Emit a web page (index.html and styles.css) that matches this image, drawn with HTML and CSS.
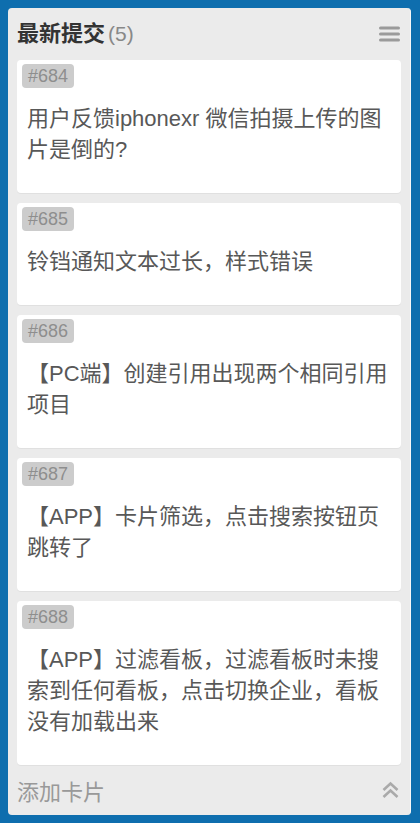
FILE: index.html
```html
<!DOCTYPE html>
<html lang="zh">
<head>
<meta charset="utf-8">
<link rel="stylesheet" href="styles.css">
</head>
<body>
<div class="list">
  <div class="list-header">
    <h2 class="title">最新提交<span class="count">(5)</span></h2>
    <svg class="menu" width="21" height="16" viewBox="0 0 21 16">
      <rect x="0" y="0.5" width="21" height="3" rx="1.5" fill="#9a9a9a"/>
      <rect x="0" y="6.5" width="21" height="3" rx="1.5" fill="#9a9a9a"/>
      <rect x="0" y="12.5" width="21" height="3" rx="1.5" fill="#9a9a9a"/>
    </svg>
  </div>
  <div class="cards">
    <div class="card"><span class="tag">#684</span><p class="text">用户反馈iphonexr 微信拍摄上传的图片是倒的?</p></div>
    <div class="card"><span class="tag">#685</span><p class="text">铃铛通知文本过长，样式错误</p></div>
    <div class="card"><span class="tag">#686</span><p class="text">【PC端】创建引用出现两个相同引用项目</p></div>
    <div class="card"><span class="tag">#687</span><p class="text">【APP】卡片筛选，点击搜索按钮页跳转了</p></div>
    <div class="card"><span class="tag">#688</span><p class="text">【APP】过滤看板，过滤看板时未搜索到任何看板，点击切换企业，看板没有加载出来</p></div>
  </div>
  <div class="list-footer">
    <span class="add">添加卡片</span>
    <svg class="collapse" width="17" height="18" viewBox="0 0 17 18">
      <polyline points="1.5,9 8.5,2.5 15.5,9" fill="none" stroke="#aaaaaa" stroke-width="2.6"/>
      <polyline points="1.5,16 8.5,9.5 15.5,16" fill="none" stroke="#aaaaaa" stroke-width="2.6"/>
    </svg>
  </div>
</div>
</body>
</html>
```

FILE: styles.css
```css
html, body {
  margin: 0;
  padding: 0;
}
body {
  background: #0e6eae;
  width: 420px;
  height: 823px;
  padding: 8px 9px 8px 8px;
  box-sizing: border-box;
  font-family: "Liberation Sans", "Noto Sans CJK SC", sans-serif;
}
.list {
  background: #ebebeb;
  border-radius: 4px;
  height: 807px;
  box-sizing: border-box;
  display: flex;
  flex-direction: column;
  border-right: 1px solid #f7f7f7;
}
.list-header {
  display: flex;
  align-items: center;
  justify-content: space-between;
  height: 52px;
  padding: 0 10px 0 9px;
  box-sizing: border-box;
}
.title {
  margin: 0;
  font-size: 22px;
  font-weight: bold;
  color: #333;
  line-height: 1;
  padding-top: 1px;
}
.count {
  font-weight: normal;
  color: #888;
  margin-left: 3px;
  font-size: 21px;
}
.menu {
  display: block;
  margin-top: 1px;
}
.cards {
  display: flex;
  flex-direction: column;
  gap: 10px;
  padding: 2px 9px 0 9px;
}
.card {
  background: #fff;
  border-radius: 4px;
  padding: 4px 10px 28px 10px;
  box-shadow: 0 1px 0 #e0e0e0;
}
.tag {
  display: inline-block;
  background: #cccccc;
  color: #8e8e8e;
  font-size: 18px;
  line-height: 24px;
  height: 24px;
  padding: 0 6px;
  border-radius: 4px;
  margin-left: -5px;
}
.text {
  margin: 15px 0 0 0;
  font-size: 22px;
  line-height: 31px;
  color: #585858;
}
.list-footer {
  margin-top: auto;
  height: 52px;
  display: flex;
  align-items: center;
  justify-content: space-between;
  padding: 0 11px 0 9px;
}
.add {
  font-size: 22px;
  color: #999;
}
.collapse {
  display: block;
}
```
